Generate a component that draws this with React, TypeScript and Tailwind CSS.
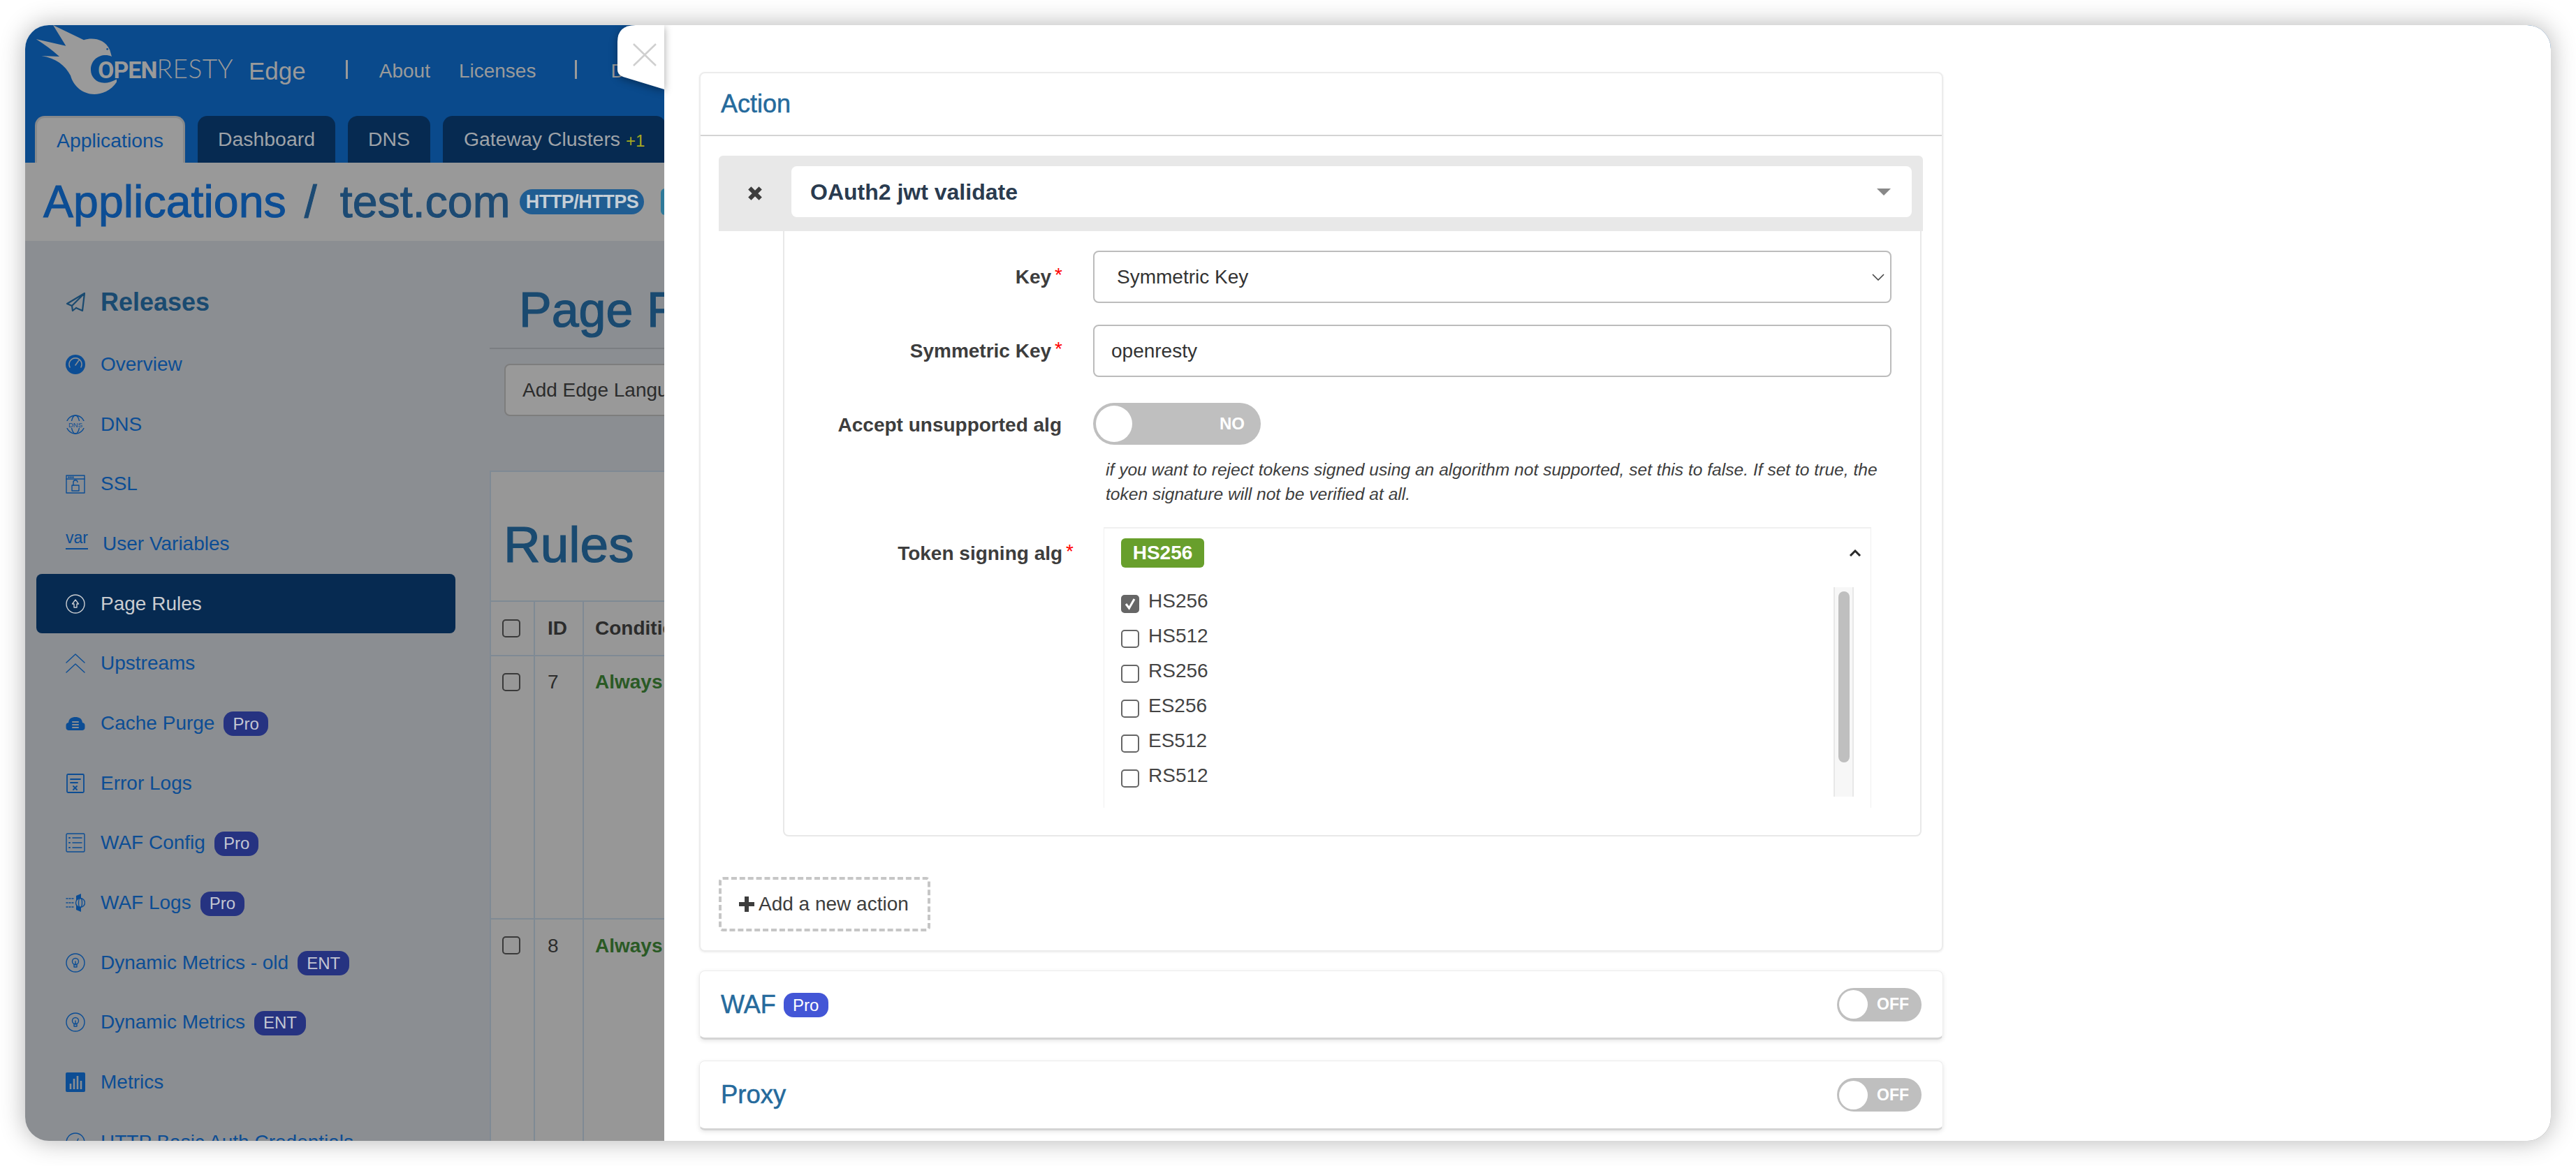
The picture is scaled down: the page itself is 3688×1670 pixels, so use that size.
import React from "react";

function Svg({ children, className = "" }: { children: React.ReactNode; className?: string }) {
  return (
    <svg viewBox="0 0 28 28" className={`h-[28px] w-[28px] shrink-0 ${className}`} fill="none" stroke="currentColor" strokeWidth="1.4" strokeLinecap="round" strokeLinejoin="round">
      {children}
    </svg>
  );
}

const Plane = () => (
  <Svg><path strokeWidth="2.2" d="M27 1 L2 16 L9 19 M27 1 L9 19 L10 26 L15 22 M27 1 L24 26 L15 22" /></Svg>
);
const Gauge = () => (
  <Svg>
    <circle cx="14" cy="14" r="14" fill="currentColor" stroke="none" />
    <path stroke="#8b8e92" strokeWidth="1.6" d="M6 18 a9 9 0 1 1 16 0 M14 15 L19 8" />
  </Svg>
);
const Dns = () => (
  <Svg>
    <circle cx="14" cy="14" r="13" />
    <ellipse cx="14" cy="14" rx="6" ry="13" />
    <rect x="0" y="9" width="28" height="10" fill="#8b8e92" stroke="none" />
    <text x="14" y="17.5" textAnchor="middle" fontSize="9.5" fill="currentColor" stroke="none" fontFamily="Liberation Sans">DNS</text>
  </Svg>
);
const Ssl = () => (
  <Svg>
    <rect x="1" y="2" width="26" height="25" />
    <path d="M1 7 H27" />
    <path strokeWidth="1.8" d="M4 4.5 H5 M7 4.5 H8 M10 4.5 H11" />
    <rect x="9" y="16" width="10" height="8" />
    <path d="M11 16 v-4 a3 3 0 0 1 6 -0.5" />
  </Svg>
);
const UpCircle = () => (
  <Svg>
    <circle cx="14" cy="14" r="13" />
    <path d="M14 8 L9.5 14 H12 V19 H16 V14 H18.5 Z" />
  </Svg>
);
const Upstream = () => (
  <Svg><path d="M1 13 L14 1 L27 13 M1 27 L14 15 L27 27" /></Svg>
);
const Cloud = () => (
  <Svg>
    <path fill="currentColor" stroke="none" d="M4 24 a4 4 0 0 1 -3.500 -4 V17 a4 4 0 0 1 3.500 -4 C4.500 7 9 5 14 5 s9.500 2 10 8 a4 4 0 0 1 3.500 4 v3 a4 4 0 0 1 -3.500 4 Z" />
    <path stroke="#8b8e92" strokeWidth="2" d="M10 12 H18 M10 16 H18 M10 20 H18" />
  </Svg>
);
const ErrDoc = () => (
  <Svg>
    <rect x="2" y="1" width="24" height="26" rx="1.5" strokeWidth="1.8" />
    <path strokeWidth="1.8" d="M7 8 H21 M7 13 H17 M11 18 L16 23 M16 18 L11 23" />
  </Svg>
);
const ListBox = () => (
  <Svg>
    <rect x="1" y="1" width="26" height="26" rx="1.5" />
    <path d="M10 7 H23 M10 14 H23 M10 21 H23" />
    <path strokeWidth="2" d="M5 7 H6 M5 14 H6 M5 21 H6" />
  </Svg>
);
const WafLog = () => (
  <Svg>
    <path fill="currentColor" stroke="none" d="M15 4 L22 1 V27 L15 24 Z" />
    <circle cx="21" cy="14" r="6.500" fill="#8b8e92" />
    <ellipse cx="21" cy="14" rx="2.500" ry="6.500" />
    <path strokeDasharray="2 2" d="M1 8 H11 M1 14 H11 M1 20 H11" />
  </Svg>
);
const Bulb = () => (
  <Svg>
    <circle cx="14" cy="14" r="13" />
    <circle cx="14" cy="12" r="4.500" />
    <path d="M12 17 V20 H16 V17 M14 12 V17" />
  </Svg>
);
const Bars = () => (
  <Svg>
    <rect x="0" y="0" width="28" height="28" rx="2" fill="currentColor" stroke="none" />
    <path stroke="#8b8e92" strokeWidth="2.6" strokeLinecap="butt" d="M7 24 V16 M12 24 V9 M17 24 V5 M22 24 V12" />
  </Svg>
);
const CheckCircle = () => (
  <Svg>
    <circle cx="14" cy="14" r="13" />
    <path d="M10 14 L14 18 L18 9" />
  </Svg>
);

const Var = () => (
  <div className="flex w-[32px] shrink-0 flex-col leading-[24px] mt-[-12px] text-[23px]">
    <span>var</span>
    <span className="mt-[3px] h-[2px] w-full bg-[#0c4d94]" />
  </div>
);

type Item = { icon: React.ReactNode; label: string; badge?: string; active?: boolean; wide?: boolean };

const items: Item[] = [
  { icon: <Gauge />, label: "Overview" },
  { icon: <Dns />, label: "DNS" },
  { icon: <Ssl />, label: "SSL" },
  { icon: <Var />, label: "User Variables", wide: true },
  { icon: <UpCircle />, label: "Page Rules", active: true },
  { icon: <Upstream />, label: "Upstreams" },
  { icon: <Cloud />, label: "Cache Purge", badge: "Pro" },
  { icon: <ErrDoc />, label: "Error Logs" },
  { icon: <ListBox />, label: "WAF Config", badge: "Pro" },
  { icon: <WafLog />, label: "WAF Logs", badge: "Pro" },
  { icon: <Bulb />, label: "Dynamic Metrics - old", badge: "ENT" },
  { icon: <Bulb />, label: "Dynamic Metrics", badge: "ENT" },
  { icon: <Bars />, label: "Metrics" },
  { icon: <CheckCircle />, label: "HTTP Basic Auth Credentials" },
];

function SideItem({ it }: { it: Item }) {
  return (
    <div className={`flex h-[85.7px] shrink-0 items-center rounded-[8px] pl-[42px] ${it.active ? "bg-[#062a51] text-[#c9ccd0]" : "text-[#0c4d94]"}`}>
      {it.icon}
      <span className={`${it.wide ? "ml-[21px]" : "ml-[22px]"} text-[28px] whitespace-nowrap`}>{it.label}</span>
      {it.badge && (
        <span className="ml-[13px] mt-[2px] flex h-[35px] items-center rounded-[14px] bg-[#263381] px-[13px] text-[24px] text-[#c3c6d2]">{it.badge}</span>
      )}
    </div>
  );
}

function Box({ className = "" }: { className?: string }) {
  return <div className={`h-[26px] w-[26px] rounded-[5px] border-2 border-[#3a3a3a] ${className}`} />;
}

function Cell({ children, className = "" }: { children?: React.ReactNode; className?: string }) {
  return <div className={`flex shrink-0 border-r-2 border-[#7f8a94] ${className}`}>{children}</div>;
}

function Background() {
  return (
    <div className="flex h-full w-full flex-col">
      <div className="flex h-[197px] shrink-0 flex-col bg-[#0a4a8c]">
        <div className="flex h-[130px] shrink-0 items-start text-[#9a9a9a]">
          <div className="relative h-[130px] w-[310px] shrink-0">
            <svg viewBox="108 108 392 300" className="absolute left-0 top-0 h-[100px] w-[130.67px]">
              <path fill="#9a9a9a" d="M228 108 L360 172 C395 160 450 165 472 215 L480 243 C440 225 390 250 390 300 C390 345 440 380 510 335 C490 385 440 405 405 405 C355 405 315 370 303 325 C280 280 240 250 178 240 L255 243 C225 215 190 190 155 168 L283 197 Z" />
              <circle cx="461" cy="211" r="4" fill="#0a4a8c" />
            </svg>
            <div className="absolute left-[104px] top-[42px] flex items-baseline leading-[40px]">
              <span className="font-['Roboto',sans-serif] text-[34px] font-bold tracking-[-1px]">OPEN</span>
              <span className="font-['Lato',sans-serif] text-[37px] font-light tracking-[0.5px]">RESTY</span>
            </div>
          </div>
          <span className="ml-[10px] mt-[46px] text-[35px] leading-[40px]">Edge</span>
          <span className="ml-[57px] mt-[50px] h-[27px] w-[3px] bg-[#9a9a9a]" />
          <span className="ml-[45px] mt-[50px] text-[28px] leading-[32px]">About</span>
          <span className="ml-[41px] mt-[50px] text-[28px] leading-[32px]">Licenses</span>
          <span className="ml-[56px] mt-[50px] h-[27px] w-[3px] bg-[#9a9a9a]" />
          <span className="ml-[48px] mt-[50px] text-[28px] leading-[32px]">Docs</span>
        </div>
        <div className="flex h-[67px] shrink-0 items-stretch gap-[18px] pl-[14px] text-[28.4px]">
          <div className="flex w-[215px] items-center justify-center rounded-t-[14px] border-x-[3px] border-t-[3px] border-[#87898b] bg-[#999999] text-[#0c4d94]">Applications</div>
          <div className="flex w-[197px] items-center justify-center rounded-t-[14px] bg-[#062a51] text-[#9fa3a8]">Dashboard</div>
          <div className="flex w-[118px] items-center justify-center rounded-t-[14px] bg-[#062a51] text-[#9fa3a8]">DNS</div>
          <div className="flex items-center whitespace-nowrap rounded-t-[14px] bg-[#062a51] px-[30px] text-[#9fa3a8]">
            Gateway Clusters<span className="ml-[8px] mt-[4px] text-[24px] text-[#a8a820]">+1</span>
          </div>
        </div>
      </div>
      <div className="flex h-[112px] shrink-0 items-center bg-[#999999] pl-[26px] text-[64.5px] leading-[70px] [-webkit-text-stroke:1px]">
        <span className="text-[#0c4d94]">Applications</span>
        <span className="ml-[26px] text-[#1c4a73]">/</span>
        <span className="ml-[33px] text-[#1c4a73]">test.com</span>
        <span className="ml-[14px] flex h-[36px] w-[178px] items-center justify-center rounded-[18px] bg-[#205d92] text-[27px] font-bold tracking-[-0.5px] text-[#c5ced6] [-webkit-text-stroke:0]">HTTP/HTTPS</span>
        <span className="ml-[24px] h-[38px] w-[100px] rounded-[6px] bg-[#2f7a9a]" />
      </div>
      <div className="flex min-h-0 flex-1 bg-[#8b8e92]">
        <aside className="flex w-[665px] shrink-0 flex-col overflow-hidden pl-[16px] pr-[49px] pt-[46px]">
          <div className="flex h-[88px] shrink-0 items-start pl-[42px] pt-[28px] text-[#1a4a70]">
            <Plane />
            <span className="ml-[22px] mt-[-5px] text-[36px] font-bold leading-[38px]">Releases</span>
          </div>
          {items.map((it) => (
            <SideItem key={it.label} it={it} />
          ))}
        </aside>
        <main className="flex min-w-0 flex-1 flex-col overflow-hidden">
          <div className="flex h-[155px] shrink-0 items-end border-b-2 border-[#7b7e82] pb-[14px] pl-[42px]">
            <span className="text-[70px] leading-[80px] text-[#1a4a70] [-webkit-text-stroke:1.2px]">Page Rules</span>
          </div>
          <div className="ml-[21px] mt-[21px] flex h-[75px] w-[400px] shrink-0 items-center rounded-[8px] border-2 border-[#7d7d7d] bg-[#999999] pl-[24px] text-[28px] text-[#2c2c2c]">Add Edge Language</div>
          <div className="mt-[78px] flex min-h-0 flex-1 flex-col border-l-2 border-t-2 border-[#7f8a94] bg-[#979797]">
            <div className="flex h-[184px] shrink-0 items-center pl-[18px] pt-[24px] text-[73px] text-[#1a4a70] [-webkit-text-stroke:1.2px]">Rules</div>
            <div className="flex h-[80px] shrink-0 items-stretch border-y-2 border-[#7f8a94] font-bold text-[28px] text-[#2c2c2c]">
              <Cell className="w-[63px] items-center pl-[16px]"><Box /></Cell>
              <Cell className="w-[70px] items-center pl-[18px]">ID</Cell>
              <div className="flex items-center pl-[16px]">Condition</div>
            </div>
            <div className="flex h-[377px] shrink-0 border-b-2 border-[#7f8a94] text-[28px] text-[#2c2c2c]">
              <Cell className="w-[63px] items-start pl-[16px] pt-[24px]"><Box /></Cell>
              <Cell className="w-[70px] items-start pl-[18px] pt-[16px]">7</Cell>
              <div className="pl-[16px] pt-[16px] font-bold text-[#2a5a25]">Always</div>
            </div>
            <div className="flex min-h-0 flex-1 text-[28px] text-[#2c2c2c]">
              <Cell className="w-[63px] items-start pl-[16px] pt-[24px]"><Box /></Cell>
              <Cell className="w-[70px] items-start pl-[18px] pt-[17px]">8</Cell>
              <div className="pl-[16px] pt-[17px] font-bold text-[#2a5a25]">Always</div>
            </div>
          </div>
        </main>
      </div>
    </div>
  );
}

function Label({ text, req, pr }: { text: string; req?: boolean; pr: string }) {
  return (
    <div className={`flex w-[442px] shrink-0 items-center justify-end text-[28px] font-bold text-[#3d3d3d] ${pr}`}>
      {text}
      {req && <span className="ml-[5px] mt-[-6px] text-[28px] font-normal leading-[20px] text-[#ff0000]">*</span>}
    </div>
  );
}

function Option({ label, checked }: { label: string; checked?: boolean }) {
  return (
    <div className="flex h-[50px] items-center text-[28px] text-[#444444]">
      <div className={`mt-[7px] flex h-[26px] w-[26px] items-center justify-center rounded-[5px] border-2 border-[#666666] ${checked ? "bg-[#666666]" : "bg-white"}`}>
        {checked && (
          <svg viewBox="0 0 20 20" className="h-[20px] w-[20px]" fill="none" stroke="#ffffff" strokeWidth="3">
            <path d="M4 10 L8.500 16 L16 3" />
          </svg>
        )}
      </div>
      <span className="ml-[13px]">{label}</span>
    </div>
  );
}

function OffToggle() {
  return (
    <div className="relative flex h-[48px] w-[121px] shrink-0 items-center rounded-full bg-[#bfbfbf] pl-[3px]">
      <div className="h-[41px] w-[41px] rounded-full bg-white" />
      <span className="ml-[13px] text-[23px] font-bold leading-none text-white">OFF</span>
    </div>
  );
}

function Modal() {
  return (
    <div className="absolute bottom-0 left-[915px] right-0 top-0 flex flex-col bg-white pl-[50px] pt-[67px]">
      <div className="flex w-[1781px] shrink-0 flex-col rounded-[8px] border-2 border-[#ececec] shadow-[0_1px_3px_rgba(0,0,0,0.08)]">
        <div className="flex h-[90px] shrink-0 items-center border-b-2 border-[#d4d4d4] pl-[29px] text-[36px] text-[#256a9c] [-webkit-text-stroke:0.5px]">Action</div>
        <div className="flex flex-col pb-[27px] pl-[26px] pt-[28px]">
          <div className="flex h-[108px] w-[1724px] shrink-0 items-center rounded-t-[6px] bg-[#e8e8e8]">
            <div className="flex w-[104px] shrink-0 justify-center">
              <svg viewBox="0 0 20 20" className="h-[22px] w-[22px]" fill="none" stroke="#3d3d3d" strokeWidth="5.500"><path d="M3 3 L17 17 M17 3 L3 17" /></svg>
            </div>
            <div className="mb-[5px] flex h-[73px] w-[1604px] shrink-0 items-center justify-between rounded-[8px] bg-white pl-[27px] pr-[30px]">
              <span className="text-[32px] font-bold text-[#2a3b4f]">OAuth2 jwt validate</span>
              <svg viewBox="0 0 20 10" className="h-[10px] w-[20px]"><path fill="#888888" d="M0 0 H20 L10 10 Z" /></svg>
            </div>
          </div>
          <div className="ml-[92px] flex h-[867px] w-[1630px] shrink-0 flex-col rounded-b-[8px] border-x-2 border-b-2 border-[#e8e8e8] pt-[28px]">
            <div className="flex h-[75px] shrink-0">
              <Label text="Key" req pr="pr-[44px]" />
              <div className="flex w-[1143px] shrink-0 items-center justify-between rounded-[8px] border-2 border-[#bcbcbc] pl-[32px] pr-[8px] text-[28px] text-[#333333]">
                Symmetric Key
                <svg viewBox="0 0 18 10" className="h-[10px] w-[18px]" fill="none" stroke="#444444" strokeWidth="1.6"><path d="M1 1 L9 9 L17 1" /></svg>
              </div>
            </div>
            <div className="mt-[31px] flex h-[75px] shrink-0">
              <Label text="Symmetric Key" req pr="pr-[44px]" />
              <div className="flex w-[1143px] shrink-0 items-center rounded-[8px] border-2 border-[#bcbcbc] pl-[24px] text-[28px] text-[#333333]">openresty</div>
            </div>
            <div className="mt-[37px] flex h-[60px] shrink-0">
              <Label text="Accept unsupported alg" pr="pr-[45px] pt-[4px]" />
              <div className="flex w-[240px] shrink-0 items-center justify-between rounded-full bg-[#bfbfbf] pl-[4px] pr-[23px]">
                <div className="h-[52px] w-[52px] rounded-full bg-white" />
                <span className="text-[24px] font-bold text-white">NO</span>
              </div>
            </div>
            <div className="ml-[460px] mt-[18px] w-[1120px] shrink-0 text-[24.6px] italic leading-[35px] text-[#3d3d3d]">
              if you want to reject tokens signed using an algorithm not supported, set this to false. If set to true, the token signature will not be verified at all.
            </div>
            <div className="mt-[30px] flex h-[402px] shrink-0">
              <div className="flex h-[60px] w-[442px] shrink-0 pt-[16px]">
                <Label text="Token signing alg" req pr="pr-[28px]" />
              </div>
              <div className="ml-[15px] flex w-[1099px] shrink-0 flex-col border-x border-t-2 border-[#f0f0f0]">
                <div className="flex shrink-0 items-center justify-between pl-[24px] pr-[13px] pt-[14px]">
                  <div className="flex h-[42px] w-[119px] items-center justify-center rounded-[6px] bg-[#689f2c] text-[28px] font-bold text-white">HS256</div>
                  <svg viewBox="0 0 18 10" className="h-[10px] w-[18px]" fill="none" stroke="#2a2a2a" strokeWidth="3"><path d="M2 9 L9 2 L16 9" /></svg>
                </div>
                <div className="flex justify-between pl-[24px] pr-[24px] pt-[23px]">
                  <div className="flex flex-col">
                    <Option label="HS256" checked />
                    <Option label="HS512" />
                    <Option label="RS256" />
                    <Option label="ES256" />
                    <Option label="ES512" />
                    <Option label="RS512" />
                  </div>
                  <div className="mt-[5px] flex h-[300px] w-[29px] justify-center border-x-2 border-[#e8e8e8] bg-[#f7f7f7] pt-[6px]">
                    <div className="h-[245px] w-[16px] rounded-full bg-[#bfbfbf]" />
                  </div>
                </div>
              </div>
            </div>
          </div>
          <div className="mt-[58px] flex h-[78px] w-[303px] shrink-0 items-center rounded-[6px] border-[4px] border-dashed border-[#c6c6c6] pl-[25px] text-[28px] text-[#3d3d3d]">
            <svg viewBox="0 0 22 22" className="h-[22px] w-[22px]" fill="none" stroke="#3d3d3d" strokeWidth="6"><path d="M11 0 V22 M0 11 H22" /></svg>
            <span className="ml-[6px]">Add a new action</span>
          </div>
        </div>
      </div>
      <div className="mt-[27px] flex h-[99px] w-[1781px] shrink-0 items-center justify-between rounded-[8px] border-x border-t border-b-[3px] border-[#ececec] border-b-[#d4d4d4] pl-[30px] pr-[30px] shadow-[0_2px_6px_rgba(0,0,0,0.1)]">
        <div className="flex items-center text-[36px] text-[#256a9c] [-webkit-text-stroke:0.5px]">
          WAF
          <span className="ml-[11px] mt-[2px] flex h-[35px] w-[64px] items-center justify-center rounded-[14px] bg-[#4356d6] text-[24px] text-white [-webkit-text-stroke:0]">Pro</span>
        </div>
        <OffToggle />
      </div>
      <div className="mt-[30px] flex h-[100px] w-[1781px] shrink-0 items-center justify-between rounded-[8px] border-x border-t border-b-[3px] border-[#ececec] border-b-[#d4d4d4] pl-[30px] pr-[30px] shadow-[0_2px_6px_rgba(0,0,0,0.1)]">
        <span className="text-[36.5px] text-[#256a9c] [-webkit-text-stroke:0.5px]">Proxy</span>
        <OffToggle />
      </div>
    </div>
  );
}

function CloseTab() {
  return (
    <div className="absolute left-[848px] top-0 h-[92px] w-[67px]">
      <svg viewBox="0 0 67 92" className="h-[92px] w-[67px] overflow-visible drop-shadow-[0_3px_6px_rgba(0,0,0,0.35)]">
        <path fill="#ffffff" d="M26 0 H67 V92 L8 74 Q0 71 0 64 V24 Q0 0 26 0 Z" />
        <path fill="none" stroke="#cfcfcf" strokeWidth="2.500" d="M23 27 L55 58 M55 27 L23 58" />
      </svg>
    </div>
  );
}

export default function App() {
  return (
    <div className="flex h-[1670px] w-[3688px] bg-white p-[36px] font-['Liberation_Sans',Arial,sans-serif]">
      <div className="rounded-[34px] shadow-[0_0_36px_rgba(0,0,0,0.3)]">
        <div className="relative h-[1598px] w-[3616px] overflow-hidden rounded-[34px]">
          <Background />
          <Modal />
          <CloseTab />
        </div>
      </div>
    </div>
  );
}
